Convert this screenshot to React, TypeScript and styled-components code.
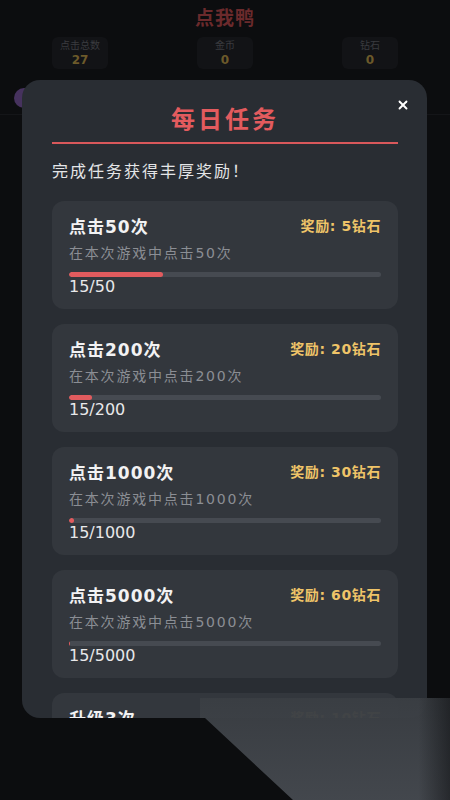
import React from 'react';
import styled, { createGlobalStyle } from 'styled-components';
import { X } from 'lucide-react';

const GlobalStyle = createGlobalStyle`
  html, body {
    margin: 0;
    padding: 0;
    background: #0c0d0f;
  }
  body {
    width: 450px;
    height: 800px;
    overflow: hidden;
    font-family: 'DejaVu Sans', 'Noto Sans CJK SC', sans-serif;
  }
`;

type Task = {
  title: string;
  desc: string;
  reward: string;
  current: number;
  target: number;
};

const tasks: Task[] = [
  { title: '点击50次', desc: '在本次游戏中点击50次', reward: '奖励: 5钻石', current: 15, target: 50 },
  { title: '点击200次', desc: '在本次游戏中点击200次', reward: '奖励: 20钻石', current: 15, target: 200 },
  { title: '点击1000次', desc: '在本次游戏中点击1000次', reward: '奖励: 30钻石', current: 15, target: 1000 },
  { title: '点击5000次', desc: '在本次游戏中点击5000次', reward: '奖励: 60钻石', current: 15, target: 5000 },
  { title: '升级3次', desc: '在本次游戏中升级3次', reward: '奖励: 10钻石', current: 0, target: 3 },
];

const stats = [
  { label: '点击总数', value: '27' },
  { label: '金币', value: '0' },
  { label: '钻石', value: '0' },
];

const Page = styled.div`
  position: relative;
  width: 450px;
  height: 800px;
  overflow: hidden;
  background: #0c0d0f;
`;

const Header = styled.header`
  display: flex;
  flex-direction: column;
  align-items: center;
  padding: 6px 52px 0;
  height: 108px;
  border-bottom: 1px solid #141518;
`;

const AppTitle = styled.h1`
  margin: 0;
  font-size: 19px;
  line-height: 24px;
  font-weight: 700;
  letter-spacing: 1px;
  color: #6b2a2c;
`;

const StatRow = styled.div`
  align-self: stretch;
  display: flex;
  justify-content: space-between;
  margin-top: 7px;
`;

const StatBox = styled.div`
  width: 56px;
  height: 32px;
  border-radius: 6px;
  background: #121316;
  display: flex;
  flex-direction: column;
  align-items: center;
  justify-content: center;
`;

const StatLabel = styled.span`
  font-size: 10px;
  line-height: 13px;
  color: #3a3b3f;
`;

const StatValue = styled.span`
  font-size: 12px;
  line-height: 16px;
  font-weight: 700;
  color: #6c5a2a;
`;

const Blob = styled.div`
  margin: -27px 0 0 14px;
  width: 20px;
  height: 20px;
  border-radius: 50%;
  background: #46325e;
`;

const Modal = styled.div`
  position: absolute;
  top: 80px;
  left: 22px;
  width: 405px;
  height: 638px;
  box-sizing: border-box;
  padding: 22px 29px 0 30px;
  border-radius: 18px;
  background: #292d33;
  overflow: hidden;
`;

const CloseButton = styled.button`
  position: absolute;
  top: 18px;
  right: 17px;
  padding: 0;
  border: 0;
  background: none;
  color: #ffffff;
  display: flex;
  cursor: pointer;
`;

const ModalTitle = styled.h2`
  margin: 0;
  padding-bottom: 8px;
  border-bottom: 2px solid #d9585b;
  text-align: center;
  font-family: 'Noto Sans CJK SC', sans-serif;
  font-size: 24px;
  line-height: 32px;
  font-weight: 700;
  letter-spacing: 3px;
  color: #e35b5e;
`;

const Intro = styled.p`
  margin: 16px 0 17px;
  font-size: 16px;
  line-height: 24px;
  letter-spacing: 2px;
  color: #e4e5e7;
`;

const TaskList = styled.div`
  display: flex;
  flex-direction: column;
  gap: 15px;
`;

const Card = styled.div`
  padding: 13px 17px 12px;
  border-radius: 12px;
  background: #33373d;
`;

const CardHead = styled.div`
  display: flex;
  justify-content: space-between;
  align-items: center;
  height: 22px;
`;

const TaskTitle = styled.span`
  font-size: 17px;
  font-weight: 700;
  letter-spacing: 1px;
  color: #f2f2f3;
`;

const Reward = styled.span`
  font-size: 14px;
  font-weight: 700;
  letter-spacing: 0.6px;
  color: #efc468;
`;

const Desc = styled.div`
  margin-top: 6px;
  font-size: 14px;
  line-height: 22px;
  letter-spacing: 1.8px;
  color: #8b8e94;
`;

const Track = styled.div`
  margin-top: 8px;
  height: 5px;
  border-radius: 3px;
  background: #464a51;
  overflow: hidden;
`;

const Fill = styled.div`
  height: 100%;
  border-radius: 3px;
  background: #e15b5e;
`;

const Count = styled.div`
  font-size: 16px;
  line-height: 20px;
  color: #e8e8ea;
`;

// light smear over the lower right of the screen
const Glare = styled.div`
  position: absolute;
  left: 0;
  top: 698px;
  width: 450px;
  height: 102px;
  background:
    linear-gradient(90deg, rgba(10, 11, 13, 0) 93%, rgba(10, 11, 13, 0.5) 100%),
    linear-gradient(180deg, rgba(58, 62, 67, 0.97) 0%, rgba(68, 72, 78, 0.98) 100%);
  clip-path: polygon(200px 0, 450px 0, 450px 102px, 293px 102px, 205px 20px, 200px 20px);
`;

const TaskCard: React.FC<{ task: Task }> = ({ task }) => {
  const pct = Math.min(100, (task.current / task.target) * 100);
  return (
    <Card>
      <CardHead>
        <TaskTitle>{task.title}</TaskTitle>
        <Reward>{task.reward}</Reward>
      </CardHead>
      <Desc>{task.desc}</Desc>
      <Track>
        <Fill style={{ width: `${pct}%` }} />
      </Track>
      <Count>
        {task.current}/{task.target}
      </Count>
    </Card>
  );
};

const App: React.FC = () => {
  return (
    <>
      <GlobalStyle />
      <Page>
        <Header>
          <AppTitle>点我鸭</AppTitle>
          <StatRow>
            {stats.map((s) => (
              <StatBox key={s.label}>
                <StatLabel>{s.label}</StatLabel>
                <StatValue>{s.value}</StatValue>
              </StatBox>
            ))}
          </StatRow>
        </Header>
        <Blob />

        <Modal>
          <CloseButton aria-label="关闭">
            <X size={14} strokeWidth={3.2} />
          </CloseButton>
          <ModalTitle>每日任务</ModalTitle>
          <Intro>完成任务获得丰厚奖励！</Intro>
          <TaskList>
            {tasks.map((t) => (
              <TaskCard key={t.title} task={t} />
            ))}
          </TaskList>
        </Modal>
        <Glare />
      </Page>
    </>
  );
};

export default App;
